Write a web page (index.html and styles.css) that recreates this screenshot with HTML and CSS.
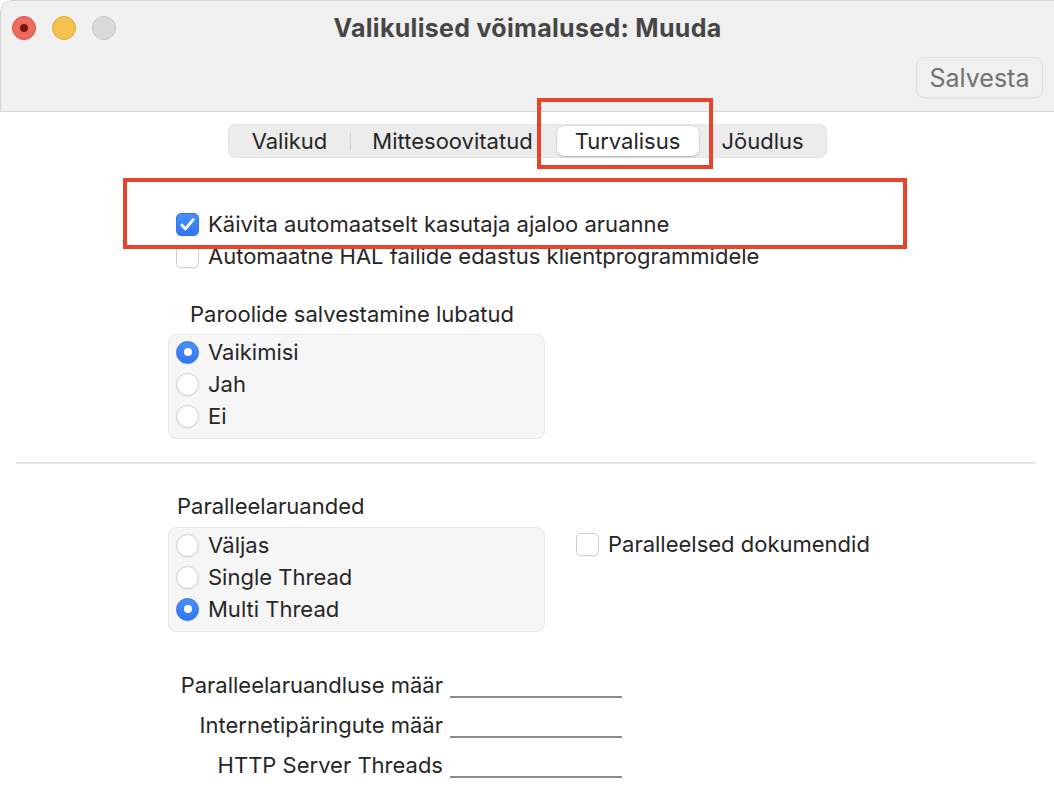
FILE: index.html
```html
<!DOCTYPE html>
<html lang="et">
<head>
<meta charset="utf-8">
<title>Valikulised võimalused: Muuda</title>
<link rel="stylesheet" href="styles.css">
</head>
<body>
<div class="window">
  <header class="titlebar">
    <div class="title-row">
      <div class="lights">
        <span class="light red"><span class="dot"></span></span>
        <span class="light yellow"></span>
        <span class="light grey"></span>
      </div>
      <h1 class="title">Valikulised võimalused: Muuda</h1>
      <div></div>
    </div>
    <div class="toolbar">
      <button class="btn">Salvesta</button>
    </div>
  </header>

  <main class="content">
    <div class="tabs-row">
      <div class="segmented">
        <span class="seg seg-1">Valikud</span>
        <span class="seg-sep"></span>
        <span class="seg seg-2">Mittesoovitatud</span>
        <span class="seg seg-3 selected">Turvalisus</span>
        <span class="seg seg-4">Jõudlus</span>
      </div>
    </div>

    <div class="form form-top">
      <div class="check-row">
        <span class="checkbox checked"><svg viewBox="0 0 24 24" width="21" height="21"><path d="M5.5 12.5l4.2 4.6L18.5 6.5" fill="none" stroke="#fff" stroke-width="3.2" stroke-linecap="round" stroke-linejoin="round"/></svg></span>
        <span class="label">Käivita automaatselt kasutaja ajaloo aruanne</span>
      </div>
      <div class="check-row">
        <span class="checkbox"></span>
        <span class="label">Automaatne HAL failide edastus klientprogrammidele</span>
      </div>

      <div class="group-title gt-1">Paroolide salvestamine lubatud</div>
      <div class="radio-box">
        <div class="radio-row"><span class="radio on"></span><span class="label">Vaikimisi</span></div>
        <div class="radio-row"><span class="radio"></span><span class="label">Jah</span></div>
        <div class="radio-row"><span class="radio"></span><span class="label">Ei</span></div>
      </div>
    </div>

    <hr class="divider">

    <div class="form">
      <div class="group-title gt-2">Paralleelaruanded</div>
      <div class="parallel">
        <div class="radio-box">
          <div class="radio-row"><span class="radio"></span><span class="label">Väljas</span></div>
          <div class="radio-row"><span class="radio"></span><span class="label">Single Thread</span></div>
          <div class="radio-row"><span class="radio on"></span><span class="label">Multi Thread</span></div>
        </div>
        <div class="check-row side">
          <span class="checkbox"></span>
          <span class="label">Paralleelsed dokumendid</span>
        </div>
      </div>
    </div>

    <div class="fields">
      <label class="field-label">Paralleelaruandluse määr</label>
      <span class="field"></span>
      <label class="field-label">Internetipäringute määr</label>
      <span class="field"></span>
      <label class="field-label">HTTP Server Threads</label>
      <span class="field"></span>
    </div>
  </main>

  <div class="annot annot-tab"></div>
  <div class="annot annot-check"></div>
</div>
</body>
</html>
```

FILE: styles.css
```css
* { box-sizing: border-box; }

html, body {
  margin: 0;
  padding: 0;
  background: #ffffff;
}

body {
  font-family: Inter, "Noto Sans", "Liberation Sans", sans-serif;
  color: #262626;
  font-size: 22px;
}

.window {
  position: relative;
  width: 1054px;
  height: 800px;
  background: #ffffff;
  border-top-left-radius: 12px;
  overflow: hidden;
}

/* ---------- title bar ---------- */
.titlebar {
  height: 112px;
  background: #f0f0f0;
  border-bottom: 1px solid #d9d9d9;
  border-top: 1px solid #d4d4d4;
  border-left: 1px solid #d4d4d4;
  border-top-left-radius: 12px;
}

.title-row {
  display: grid;
  grid-template-columns: 1fr auto 1fr;
  align-items: center;
  height: 53px;
}

.lights {
  display: flex;
  gap: 16px;
  padding-left: 11px;
}

.light {
  width: 24px;
  height: 24px;
  border-radius: 50%;
  display: flex;
  align-items: center;
  justify-content: center;
}

.light.red { background: #ee6a5e; border: 1px solid #d9534a; }
.light.yellow { background: #f6c24f; border: 1px solid #dfa93a; }
.light.grey { background: #dadada; border: 1px solid #c4c4c4; }

.dot {
  width: 8px;
  height: 8px;
  border-radius: 50%;
  background: #7a1410;
}

.title {
  margin: 0;
  font-size: 25px;
  font-weight: 700;
  color: #464646;
  letter-spacing: 0.3px;
}

.toolbar {
  display: flex;
  justify-content: flex-end;
  padding: 3px 11px 0 0;
}

.btn {
  font-family: inherit;
  font-size: 25px;
  color: #727272;
  background: #f0f0f0;
  border: 1px solid #e0e0e0;
  border-radius: 8px;
  height: 41px;
  width: 127px;
  padding: 0;
  box-shadow: 0 1px 0 rgba(0,0,0,0.02);
}

/* ---------- content ---------- */
.content {
  padding-top: 12px;
}

.tabs-row {
  display: flex;
  justify-content: center;
}

.segmented {
  display: flex;
  align-items: center;
  height: 34px;
  padding: 2px;
  background: #ececec;
  border-radius: 8px;
  box-shadow: inset 0 0 0 1px #e4e4e4;
}

.seg {
  display: flex;
  align-items: center;
  justify-content: center;
  height: 30px;
  color: #262626;
  white-space: nowrap;
}

.seg-1 { width: 120px; }
.seg-2 { width: 204px; }
.seg-3 { width: 142px; margin: 0 2px; }
.seg-4 { width: 124px; }

.seg.selected {
  background: #ffffff;
  border-radius: 7px;
  box-shadow: 0 1px 2px rgba(0,0,0,0.22), 0 0 0 0.5px rgba(0,0,0,0.08);
}

.seg-sep {
  width: 1px;
  height: 17px;
  background: #cfcfcf;
}

.form {
  padding-left: 168px;
}

.form-top {
  padding-top: 50px;
}

.check-row {
  display: flex;
  align-items: center;
  gap: 9px;
  height: 32px;
  margin-left: 8px;
}

.checkbox {
  width: 23px;
  height: 23px;
  flex: none;
  border-radius: 5px;
  background: #ffffff;
  border: 1px solid #cfcfcf;
  box-shadow: 0 1px 1px rgba(0,0,0,0.05);
  display: flex;
  align-items: center;
  justify-content: center;
}

.checkbox.checked {
  background: linear-gradient(#4a8ff8, #2f77f2);
  border-color: #2f74ea;
}

.label {
  white-space: nowrap;
}

.group-title {
  line-height: 24px;
}

.gt-1 {
  margin: 30px 0 8px 22px;
}

.gt-2 {
  margin: 30px 0 9px 9px;
}

.radio-box {
  width: 377px;
  background: #f6f6f6;
  border: 1px solid #e8e8e8;
  border-radius: 8px;
  padding: 1px 0 6px 7px;
}

.radio-row {
  display: flex;
  align-items: center;
  gap: 9px;
  height: 32px;
}

.radio {
  width: 23px;
  height: 23px;
  flex: none;
  border-radius: 50%;
  background: #ffffff;
  border: 1px solid #cdcdcd;
  box-shadow: 0 1px 1px rgba(0,0,0,0.04);
  display: flex;
  align-items: center;
  justify-content: center;
}

.radio.on {
  background: linear-gradient(#4a8ff8, #2f77f2);
  border-color: #2f74ea;
}

.radio.on::after {
  content: "";
  width: 8px;
  height: 8px;
  border-radius: 50%;
  background: #ffffff;
}

.divider {
  margin: 23px 18px 0 16px;
  border: 0;
  height: 2px;
  background: #e6e6e6;
}

.parallel {
  display: flex;
  align-items: flex-start;
}

.check-row.side {
  margin: 1px 0 0 31px;
}

.fields {
  display: grid;
  grid-template-columns: 443px 172px;
  column-gap: 7px;
  grid-auto-rows: 40px;
  margin-top: 33px;
}

.field-label {
  text-align: right;
  align-self: center;
  white-space: nowrap;
}

.field {
  height: 33px;
  border-bottom: 2px solid #8d8d8d;
}

/* ---------- annotation overlays ---------- */
.annot {
  position: absolute;
  border: 4px solid #e8432b;
}

.annot-tab {
  left: 537px;
  top: 98px;
  width: 176px;
  height: 71px;
}

.annot-check {
  left: 123px;
  top: 178px;
  width: 784px;
  height: 71px;
}
```
